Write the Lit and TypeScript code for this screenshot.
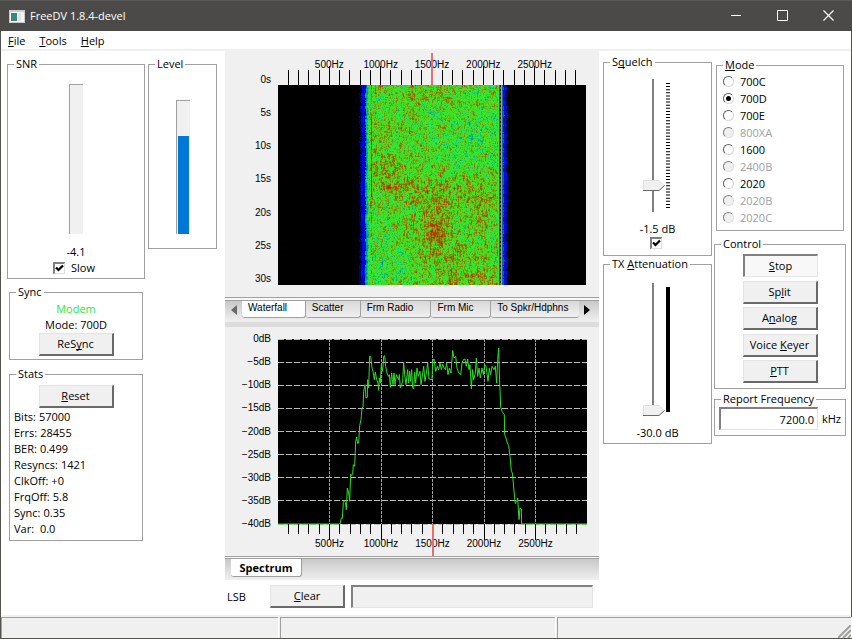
import { LitElement, html, css, svg } from "lit";
import { customElement, property } from "lit/decorators.js";

const MAX_HZ = 3000;
const TICKS = Array.from({ length: 29 }, (_, i) => (i + 1) * 100);
const pct = (hz: number) => `${(hz / MAX_HZ) * 100}%`;

/** Frequency ruler shared by the waterfall and the spectrum. */
@customElement("freq-ruler")
class FreqRuler extends LitElement {
  @property() side = "top";
  static styles = css`
    :host { display: block; }
    svg { display: block; width: 100%; overflow: visible; font: 10px "Liberation Sans", Arial, sans-serif; }
    .top { height: 32px; }
    .bottom { height: 32px; }
    line { stroke: #000; shape-rendering: crispEdges; }
    .tuned { stroke: #e07272; stroke-width: 2; }
    text { text-anchor: middle; }
  `;
  render() {
    const top = this.side === "top";
    return html`<svg class=${this.side} aria-label="Frequency axis">
      ${TICKS.map((hz) => {
        const major = hz % 500 === 0;
        const y1 = top ? (major ? 13 : 17) : 0;
        const y2 = top ? 32 : major ? 16 : 10;
        return svg`<line x1=${pct(hz)} x2=${pct(hz)} y1=${y1} y2=${y2}></line>
          ${major ? svg`<text x=${pct(hz)} y=${top ? 15 : 23}>${hz}Hz</text>` : ""}`;
      })}
      <line class="tuned" x1="50%" x2="50%" y1="0" y2="32"></line>
    </svg>`;
  }
}

/** Warm and cool patches of the band: x, y, x radius, y radius, strength. */
const PATCHES = [
  [157, 148, 12, 18, 0.17], [150, 105, 32, 12, 0.1], [107, 82, 15, 18, 0.11], [105, 102, 20, 4, 0.1],
  [152, 8, 25, 9, 0.08], [176, 170, 36, 16, 0.09], [104, 48, 22, 8, 0.05], [200, 118, 30, 30, 0.06],
  [185, 195, 45, 8, 0.08], [150, 125, 40, 20, 0.05], [195, 58, 40, 32, -0.06], [106, 150, 16, 30, -0.04],
  [108, 187, 25, 8, -0.07],
];

/** Scrolling time/frequency picture of the received band. */
@customElement("water-fall")
class WaterFall extends LitElement {
  static styles = css`
    :host { display: block; }
    canvas { display: block; width: 100%; height: 200px; background: #000; }
  `;
  render() {
    return html`<canvas width="308" height="200" role="img" aria-label="Waterfall"></canvas>`;
  }
  firstUpdated() {
    const w = 308, h = 200;
    const ctx = this.renderRoot.querySelector("canvas")!.getContext("2d")!;
    const img = ctx.createImageData(w, h);
    let seed = 20231;
    const rnd = () => {
      seed = (Math.imul(seed, 1664525) + 1013904223) >>> 0;
      return seed / 4294967296;
    };
    const stops: [number, number[]][] = [
      [0, [0, 0, 0]], [0.15, [0, 0, 140]], [0.28, [0, 10, 230]], [0.4, [0, 150, 150]],
      [0.5, [45, 235, 60]], [0.6, [70, 225, 30]], [0.76, [140, 125, 5]], [0.88, [170, 70, 0]], [1, [215, 15, 0]],
    ];
    const colour = (v: number) => {
      const t = Math.min(1, Math.max(0, v));
      let i = 1;
      while (stops[i][0] < t) i++;
      const [a, ca] = stops[i - 1], [b, cb] = stops[i];
      const k = (t - a) / (b - a);
      return ca.map((c, n) => c + (cb[n] - c) * k);
    };
    const coarse = Array.from({ length: 60 * 80 }, rnd);
    const prev = Array.from({ length: w }, rnd);
    let left = 0, right = 0;
    for (let y = 0; y < h; y++) {
      left = left * 0.6 + (rnd() - 0.5) * 1.2;
      right = right * 0.6 + (rnd() - 0.5) * 1.2;
      let last = 0.5;
      for (let x = 0; x < w; x++) {
        prev[x] = prev[x] * 0.55 + rnd() * 0.45;
        last = last * 0.3 + prev[x] * 0.7;
        let v = 0;
        if (x >= 78 && x < 232) {
          const c = coarse[Math.floor(y / 4) * 60 + Math.floor(x / 5)];
          v = 0.585 + (last - 0.5) * 0.85 + (c - 0.5) * 0.07;
          for (const [px, py, rx, ry, s] of PATCHES) {
            v += s * Math.exp(-(((x - px) / rx) ** 2) - ((y - py) / ry) ** 2);
          }
          if (v < 0.5) v = 0.5 - (0.5 - v) * 0.45;
          if (x === 93) v += y > 30 && y < 112 ? 0.26 : 0.1;
          const edge = x + left - 87;
          if (edge < 0) v = edge > -4 ? 0.25 + (last - 0.5) * 0.2 : edge > -6 ? rnd() * 0.2 : 0;
          else if (edge < 4) v = 0.37 + edge * 0.035 + (last - 0.5) * 0.2;
          if (x >= 220) {
            const r = x + right;
            v = x === 220 ? 0.55 : x === 221 ? 0.92 : x === 222 ? (y % 4 < 2 ? 0 : 0.8)
              : x === 223 ? 0.5 : r < 225 ? 0.36 : r < 228 ? 0.25 + (last - 0.5) * 0.2 : r < 229.5 ? rnd() * 0.2 : 0;
          }
        }
        const [r, g, b] = colour(v);
        img.data.set([r, g, b, 255], (y * w + x) * 4);
      }
    }
    ctx.putImageData(img, 0, 0);
  }
}

/** Signal trace; both halves are plotted on a 927 x 555 grid. */
const LOWER = `159,613 345,613 349,595 352,596 355,548 358,543 361,548 364,570 367,505 371,520 374,545 377,463
380,468 383,465 385,435 389,440 392,365 395,352 398,372 401,370 404,318 408,300 411,265 414,262 416,215 420,195
423,235 427,233 428,180 431,205 434,110 437,110 441,145 444,155 448,180 451,157 455,180 459,190 461,212 463,175
466,190 469,135 472,155 474,140 476,110 479,108 482,140 486,160 490,170 493,165 496,203 500,160 502,180 504,195
507,160 510,195 514,165 517,172 521,180 523,165 526,205 530,195 533,185 536,128 539,165 543,195 548,150 551,190
554,155 557,185 560,150 563,205 566,208 569,158 572,190 576,145 580,170 585,155 588,195 592,170 596,140 600,185`;
const UPPER = `49,160 53,130 57,178 66,180 68,125 72,118 77,155 82,140 86,150 90,130 94,150 98,133 102,145
106,150 110,130 114,165 118,145 123,160 128,92 132,115 137,110 141,145 146,160 152,165 156,130 160,120 165,118
169,140 173,118 177,150 180,135 184,208 188,150 191,180 196,160 199,115 203,170 207,145 211,175 216,145 220,165
224,135 228,140 234,185 238,145 242,165 246,140 252,150 256,140 260,190 263,120 266,85 268,160 272,262 276,275
283,285 284,345 288,355 292,370 296,378 300,410 304,455 307,460 309,480 312,515 316,552 320,545 323,535 327,600
330,565 334,568 335,613 531,613`;
const shift = (points: string, dx: number) =>
  points.split(/\s+/).map((p) => {
    const [x, y] = p.split(",").map(Number);
    return `${x + dx},${y - 58}`;
  });
const TRACE = [...shift(LOWER, -159), ...shift(UPPER, 396)].join(" ");

@customElement("spectrum-plot")
class SpectrumPlot extends LitElement {
  static styles = css`
    :host { display: block; }
    svg { display: block; width: 100%; height: 185px; background: #000; overflow: visible; }
    .area { overflow: visible; background: none; }
    line { stroke: #bcbcbc; stroke-dasharray: 6 2; shape-rendering: crispEdges; }
    .v { stroke: #a0a0a0; stroke-dasharray: 3 1; }
    polyline { fill: none; stroke: #32dc28; stroke-width: 1; vector-effect: non-scaling-stroke; }
  `;
  render() {
    return html`<svg role="img" aria-label="Spectrum">
      ${[0, 1, 2, 3, 4, 5, 6, 7, 8].map(
        (i) => svg`<line x1="0" x2="100%" y1=${`${i * 12.5}%`} y2=${`${i * 12.5}%`}></line>`
      )}
      ${[500, 1000, 1500, 2000, 2500].map(
        (hz) => svg`<line class="v" x1=${pct(hz)} x2=${pct(hz)} y1="0" y2="100%"></line>`
      )}
      <svg class="area" viewBox="0 0 927 555" preserveAspectRatio="none" width="100%" height="185">
        <polyline points=${TRACE}></polyline>
      </svg>
    </svg>`;
  }
}

const MODES: [string, boolean][] = [
  ["700C", true], ["700D", true], ["700E", true], ["800XA", false], ["1600", true],
  ["2400B", false], ["2020", true], ["2020B", false], ["2020C", false],
];

@customElement("app-root")
class AppRoot extends LitElement {
  static styles = css`
    :host { display: block; font: 11px/16px "Open Sans", "Noto Sans", sans-serif; color: #000; }
    * { box-sizing: border-box; }
    u { text-underline-offset: 1px; text-decoration-skip-ink: none; }
    .window { min-height: 100vh; display: flex; flex-direction: column; background: #fff; border: 1px solid #55534f; border-top: 0; }
    .title { height: 31px; display: flex; align-items: center; padding-left: 9px; background: #4c4a48; color: #fff; border-top: 1px solid #5c5a58; margin: 0 -1px; }
    .title h1 { margin: 0 0 0 5px; font: inherit; flex: 1; }
    .title button { width: 46px; height: 30px; padding: 0 2px 2px 0; border: 0; background: none; display: grid; place-items: center; }
    .title svg, .grip { display: block; }
    .menu { height: 20px; display: flex; gap: 14px; padding: 2px 7px 0; align-items: center; border-bottom: 2px solid #f0f0f0; }
    .menu button { border: 0; padding: 0; background: none; font: inherit; color: #000; }
    .body { flex: 1; display: grid; grid-template-columns: 224px 1fr 252px; align-items: start; }

    fieldset { margin: 0; padding: 0; border: 1px solid #a0a0a0; min-width: 0; display: block; }
    legend { margin-left: 6px; padding: 0 2px; height: 16px; }
    .col { display: flex; flex-direction: column; align-items: center; }
    .left { padding: 5px 0 0 6px; }
    .meters { display: flex; gap: 3px; align-items: flex-start; }
    .snr { width: 138px; height: 223px; }
    .level { width: 69px; height: 193px; }
    .meters .col { padding-top: 12px; }
    .level .col { padding-top: 28px; }
    .gauge { width: 14px; height: 150px; background: #f0f0f0; border: solid #a0a0a0; border-width: 1px 0 0 1px; display: flex; align-items: flex-end; padding: 0 1px; }
    .level .gauge { height: 134px; }
    .fill { width: 100%; background: #0078d7; }
    .reading { margin-top: 10px; }
    .check { display: flex; align-items: center; gap: 6px; padding-right: 4px; }
    .boxed { width: 134px; margin: 5px 0 0 2px; }
    .sync { height: 76px; }
    .stats { height: 175px; margin-top: 6px; }
    .modem { color: #2be83c; margin-top: 1px; }
    .stats .col { padding-top: 3px; }
    dl { margin: 1px 0 0 4px; }
    dl div { display: flex; gap: 3px; }
    dt, dd { margin: 0; }

    input[type="checkbox"] { appearance: none; width: 12px; height: 12px; margin: 0; border: solid; border-width: 2px 1px 1px 2px; border-color: #808080 #ddd #ddd #808080; background: #fff; display: grid; place-items: center; }
    input[type="checkbox"]:checked { background: #fff url("data:image/svg+xml,%3Csvg xmlns='http://www.w3.org/2000/svg' width='9' height='9'%3E%3Cpath d='M1 3.500L3.500 6L8 1.500' fill='none' stroke='%23000' stroke-width='2.200'/%3E%3C/svg%3E") center no-repeat; }
    .squelch input[type="checkbox"] { margin-right: 4px; }
    .push { width: 75px; height: 23px; padding: 0; background: #f0f0f0; font: inherit; color: #000; border: solid; border-width: 1px 2px 2px 1px; border-color: #e3e3e3 #696969 #696969 #e3e3e3; }
    .push.down { border-width: 2px 1px 1px 2px; border-color: #808080 #e8e8e8 #e8e8e8 #808080; background: #f8f8f8; }

    .center { background: #f0f0f0; min-width: 0; }
    .plot { display: grid; grid-template-columns: 46px 1fr; column-gap: 7px; padding: 2px 13px 12px 0; }
    .plot freq-ruler { grid-column: 2; }
    .spec { padding: 12px 12px 0 0; }
    .axis { margin: 0; padding: 0; list-style: none; display: flex; flex-direction: column; justify-content: space-between; text-align: right; font: 10px/12px "Liberation Sans", Arial, sans-serif; }
    .fall .axis { margin: -11px 0 0; }
    .spec .axis { margin: -6px 0 -6px; }
    .tabs { display: flex; border-top: 1px solid #a0a0a0; height: 22px; background: linear-gradient(#c8c8c8, #f0f0f0); padding-right: 3px; }
    .rule { height: 2px; border-top: 1px solid #a0a0a0; background: #f8f8f8; }
    .fall + .rule { height: 3px; }
    .tab { height: 17px; padding: 0 6px 3px; border: solid #a0a0a0; border-width: 0 1px 1px 0; border-radius: 0 0 3px 3px; background: linear-gradient(#d8d8d8, #f0f0f0); font: 10px/14px "Liberation Sans", Arial, sans-serif; color: #000; text-align: left; white-space: nowrap; flex: 0 1 auto; overflow: hidden; }
    .tab.on { background: #fff; }
    .nav { width: 17px; flex: none; padding: 0 0 4px; border: 0; background: none; display: grid; place-items: center; }
    .t1 { width: 64px; } .t2 { width: 55px; } .t3 { width: 71px; } .t4 { width: 60px; } .t5 { flex: 1 1 88px; border-right: 0; }
    .band { height: 5px; background: #dcdcdc; }
    .tab.lone { margin-left: 6px; padding: 0; width: 71px; height: 18px; font: bold 11px/14px "Open Sans", "Noto Sans", sans-serif; text-align: center; }
    .foot { display: flex; align-items: center; background: #fff; padding: 5px 6px 7px 2px; }
    .foot span { width: 43px; }
    .foot input { flex: 1; min-width: 0; margin-left: 6px; height: 23px; background: #f0f0f0; border: solid; border-width: 2px 1px 1px 2px; border-color: #808080 #e3e3e3 #e3e3e3 #808080; }

    .right { display: flex; gap: 4px; padding: 3px 5px 0 4px; align-items: flex-start; }
    .r1 { width: 109px; flex: none; }
    .r2 { flex: 1; margin-left: -2px; min-width: 0; padding-top: 3px; }
    .squelch { height: 202px; }
    .tx { height: 188px; }
    .r1 .col { padding-top: 9px; }
    .tx .col { padding-top: 11px; }
    .slider { display: flex; gap: 1px; align-self: stretch; padding-left: 39px; align-items: center; }
    input[type="range"] { appearance: none; writing-mode: vertical-lr; direction: rtl; width: 22px; height: 133px; margin: 0; background: linear-gradient(#808080, #808080) 9px 0 / 2px 100% no-repeat; }
    input[type="range"]::-webkit-slider-thumb { appearance: none; width: 22px; height: 11px; background: url("data:image/svg+xml,%3Csvg xmlns='http://www.w3.org/2000/svg' width='22' height='11'%3E%3Cpath d='M.5.5H16L21 5.5 16 10.5H.5Z' fill='%23f0f0f0' stroke='%23e0e0e0'/%3E%3Cpath d='M0 10.5H16L21.500 5.500' fill='none' stroke='%23696969'/%3E%3C/svg%3E"); }
    .scale { width: 4px; height: 125px; }
    .scale line { stroke: #000; stroke-width: 4; }
    .val { margin-top: 9px; }
    .mode { height: 174px; margin: 0 2px; }
    .mode label { display: flex; align-items: center; height: 17px; padding-left: 6px; gap: 6px; }
    .mode .off { color: #a0a0a0; }
    input[type="radio"] { appearance: none; width: 11px; height: 11px; margin: 0; border-radius: 50%; border: 1px solid; border-color: #606060 #d8d8d8 #d8d8d8 #606060; background: #fff; display: grid; place-items: center; }
    input[type="radio"]:disabled { background: #f0f0f0; border-color: #808080 #e0e0e0 #e0e0e0 #808080; }
    input[type="radio"]:checked::before { content: ""; width: 5px; height: 5px; border-radius: 50%; background: #000; }
    .control { height: 153px; margin-top: 5px; }
    .stack { height: 131px; padding-top: 2px; display: flex; flex-direction: column; align-items: center; justify-content: space-between; }
    .report { height: 45px; margin-top: 2px; }
    .freq { display: flex; align-items: center; gap: 4px; padding: 0 4px; }
    .freq input { flex: 1; min-width: 0; height: 23px; text-align: right; font: inherit; padding: 0 3px; border: solid; border-width: 2px 1px 1px 2px; border-color: #808080 #e3e3e3 #e3e3e3 #808080; }

    .status { height: 23px; display: grid; grid-template-columns: 277px 275px 1fr; gap: 2px; background: #f0f0f0; padding-top: 2px; }
    .status div { border: solid #a0a0a0; border-width: 1px 0 0 1px; box-shadow: 1px 0 #fff; display: flex; justify-content: flex-end; align-items: flex-end; }
  `;

  render() {
    return html`<div class="window">
      <header class="title">
        <svg width="16" height="13" viewBox="0 0 16 13">
          <rect width="16" height="13" fill="#c8cccc" /><rect x="1" y="2" width="14" height="10" fill="#f4f6f6" />
          <rect x="2" y="3" width="6" height="8" fill="#3d8577" /><rect x="9" y="3" width="3" height="8" fill="#dfe3e3" />
        </svg>
        <h1>FreeDV 1.8.4-devel</h1>
        <button aria-label="Minimize"><svg width="10" height="10"><path d="M0 5.500H10" stroke="#fff" /></svg></button>
        <button aria-label="Maximize"><svg width="11" height="11"><path d="M.5.5H10.500V10.500H.5Z" stroke="#fff" fill="none" /></svg></button>
        <button aria-label="Close"><svg width="11" height="11"><path d="M.5.5L10.500 10.500M10.500.5L.5 10.500" stroke="#fff" stroke-width="1.200" /></svg></button>
      </header>
      <nav class="menu"><button><u>F</u>ile</button><button><u>T</u>ools</button><button><u>H</u>elp</button></nav>
      <main class="body">
        <section class="left">
          <div class="meters">
            <fieldset class="snr"><legend>SNR</legend>
              <div class="col">
                <div class="gauge" role="meter" aria-label="SNR" aria-valuenow="-4.1"></div>
                <span class="reading">-4.1</span>
                <label class="check"><input type="checkbox" checked />Slow</label>
              </div>
            </fieldset>
            <fieldset class="level"><legend>Level</legend>
              <div class="col">
                <div class="gauge" role="meter" aria-label="Level" aria-valuenow="74"><div class="fill" style="height:74%"></div></div>
              </div>
            </fieldset>
          </div>
          <fieldset class="boxed sync"><legend>Sync</legend>
            <div class="col">
              <span class="modem">Modem</span><span>Mode: 700D</span>
              <button class="push">ReS<u>y</u>nc</button>
            </div>
          </fieldset>
          <fieldset class="boxed stats"><legend>Stats</legend>
            <div class="col"><button class="push"><u>R</u>eset</button></div>
            <dl>
              ${[["Bits:", "57000"], ["Errs:", "28455"], ["BER:", "0.499"], ["Resyncs:", "1421"], ["ClkOff:", "+0"],
                ["FrqOff:", "5.8"], ["Sync:", "0.35"], ["Var:", "\u00a00.0"]].map(
                ([k, v]) => html`<div><dt>${k}</dt><dd>${v}</dd></div>`)}
            </dl>
          </fieldset>
        </section>

        <section class="center">
          <div class="plot fall">
            <freq-ruler side="top"></freq-ruler>
            <ul class="axis">${[0, 5, 10, 15, 20, 25, 30].map((s) => html`<li>${s}s</li>`)}</ul>
            <water-fall></water-fall>
          </div>
          <div class="rule"></div>
          <div class="tabs">
            <button class="nav" aria-label="Previous tabs"><svg width="6" height="10"><path d="M6 0V10L0 5Z" fill="#696969" /></svg></button>
            <button class="tab on t1">Waterfall</button><button class="tab t2">Scatter</button>
            <button class="tab t3">Frm Radio</button><button class="tab t4">Frm Mic</button>
            <button class="tab t5">To Spkr/Hdphns</button>
            <button class="nav" aria-label="Next tabs"><svg width="6" height="10"><path d="M0 0V10L6 5Z" fill="#000" /></svg></button>
          </div>
          <div class="band"></div>
          <div class="plot spec">
            <ul class="axis">${[0, 5, 10, 15, 20, 25, 30, 35, 40].map((d) => html`<li>${d ? "\u2212" : ""}${d}dB</li>`)}</ul>
            <spectrum-plot></spectrum-plot>
            <freq-ruler side="bottom"></freq-ruler>
          </div>
          <div class="rule"></div>
          <div class="tabs"><button class="tab on lone">Spectrum</button></div>
          <div class="foot"><span>LSB</span><button class="push"><u>C</u>lear</button><input aria-label="Received text" readonly /></div>
        </section>

        <section class="right">
          <div class="r1">
            <fieldset class="squelch"><legend>S<u>q</u>uelch</legend>
              <div class="col">
                <div class="slider">
                  <input type="range" aria-label="Squelch" min="-5" max="15" step="0.5" value="-1.5" />
                  <svg class="scale"><line x1="2" x2="2" y1="0" y2="125" stroke-dasharray="1 2.1" /></svg>
                </div>
                <span class="val">-1.5 dB</span>
                <input type="checkbox" aria-label="Enable squelch" checked />
              </div>
            </fieldset>
            <fieldset class="tx"><legend>TX <u>A</u>ttenuation</legend>
              <div class="col">
                <div class="slider">
                  <input type="range" aria-label="TX attenuation" min="-30" max="0" value="-30" />
                  <svg class="scale"><line x1="2" x2="2" y1="0" y2="125" /></svg>
                </div>
                <span class="val">-30.0 dB</span>
              </div>
            </fieldset>
          </div>
          <div class="r2">
            <fieldset class="mode"><legend><u>M</u>ode</legend>
              ${MODES.map(([name, on]) => html`<label class=${on ? "" : "off"}>
                <input type="radio" name="mode" ?disabled=${!on} ?checked=${name === "700D"} />${name}</label>`)}
            </fieldset>
            <fieldset class="control"><legend>Control</legend>
              <div class="stack">
                <button class="push down"><u>S</u>top</button><button class="push">Sp<u>l</u>it</button>
                <button class="push">A<u>n</u>alog</button><button class="push">Voice <u>K</u>eyer</button>
                <button class="push"><u>P</u>TT</button>
              </div>
            </fieldset>
            <fieldset class="report"><legend>Report Frequency</legend>
              <label class="freq"><input type="text" value="7200.0" aria-label="Report frequency" />kHz</label>
            </fieldset>
          </div>
        </section>
      </main>
      <footer class="status"><div></div><div></div>
        <div><svg class="grip" width="13" height="13"><path d="M0 13L13 0M5 13L13 5M10 13L13 10" stroke="#a0a0a0" stroke-width="2" /></svg></div>
      </footer>
    </div>`;
  }
}
